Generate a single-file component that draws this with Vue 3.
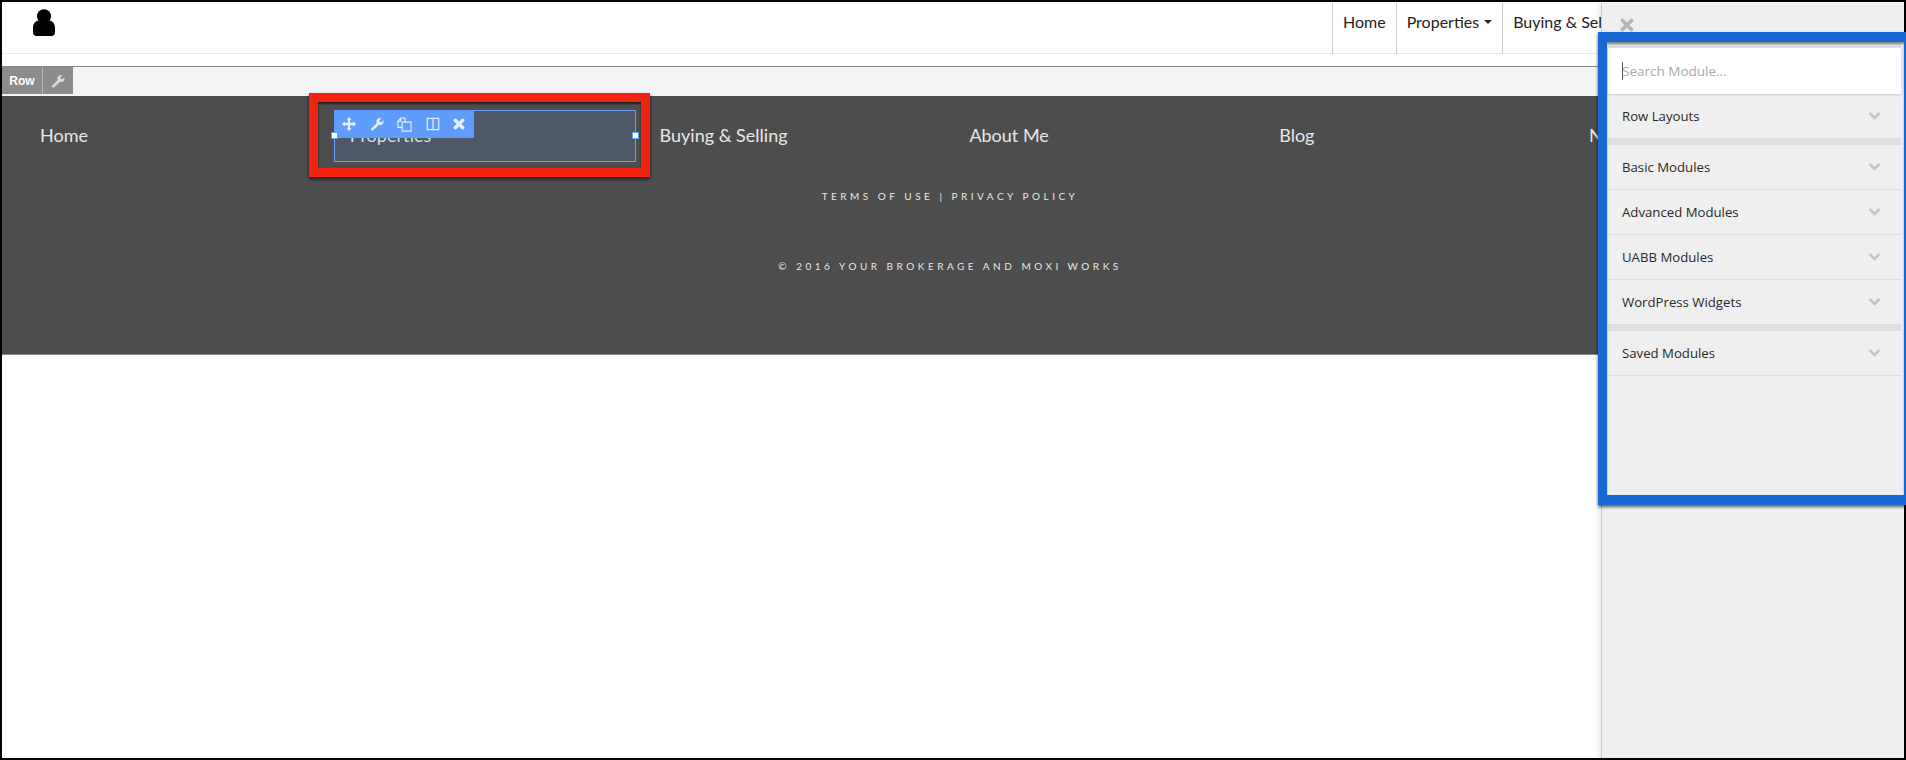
<script setup>
const headerNav = [
  { label: 'Home' },
  { label: 'Properties', caret: true },
  { label: 'Buying & Selling' },
]
const footerNav = ['Home', 'Properties', 'Buying & Selling', 'About Me', 'Blog', 'News']
const modules = [
  { label: 'Row Layouts', band: true },
  { label: 'Basic Modules' },
  { label: 'Advanced Modules' },
  { label: 'UABB Modules' },
  { label: 'WordPress Widgets', band: true },
  { label: 'Saved Modules' },
]
</script>

<template>
  <div class="page">
    <header class="site-header">
      <svg class="avatar" viewBox="0 0 22 27" width="22" height="27" aria-hidden="true">
        <circle cx="11" cy="7.2" r="7" fill="#000" />
        <path d="M0 19c0-4 2-7 5.400-7.600C7 12.600 9 13.200 11 13.200s4-.6 5.600-1.800C20 12 22 15 22 19v4.500c0 2-1.600 3.500-3.500 3.500h-15C1.600 27 0 25.500 0 23.500z" fill="#000" />
      </svg>
      <nav class="top-nav">
        <a v-for="item in headerNav" :key="item.label" class="top-link">
          {{ item.label }}<i v-if="item.caret" class="caret"></i>
        </a>
      </nav>
    </header>

    <div class="gap"></div>

    <div class="row-band">
      <span class="row-tab">Row</span>
      <span class="row-tool">
        <svg viewBox="0 0 16 16" width="14" height="14" aria-hidden="true">
          <path d="M1.500 13.200 7.600 7.100C7 5 7.600 3.200 9 2.100c1.200-.9 2.700-1.100 4-.6L10.700 3.800l.4 1.900 1.900.4 2.300-2.300c.5 1.400.2 2.900-.8 4.100-1.100 1.200-2.800 1.700-4.700 1.100l-6.100 6.100c-.6.600-1.500.6-2.100 0s-.7-1.300-.1-1.900z" fill="#dcdcdc" />
        </svg>
      </span>
    </div>

    <section class="footer-dark">
      <nav class="foot-nav">
        <a v-for="item in footerNav" :key="item" class="foot-link">{{ item }}</a>
      </nav>
      <p class="legal terms">TERMS OF USE | PRIVACY POLICY</p>
      <p class="legal copy">© 2016 YOUR BROKERAGE AND MOXI WORKS</p>
    </section>

    <div class="red-box"></div>

    <div class="selection">
      <div class="sel-toolbar">
        <svg viewBox="0 0 16 16" width="14" height="14" aria-hidden="true">
          <path d="M8 0 11 3.200H9.300V6.700H12.800V5L16 8l-3.200 3V9.300H9.300v3.500H11L8 16l-3-3.200H6.700V9.300H3.200V11L0 8l3.200-3v1.700H6.700V3.200H5z" fill="#e3eeff" />
        </svg>
        <svg viewBox="0 0 16 16" width="14" height="14" aria-hidden="true">
          <path d="M1.500 13.200 7.600 7.100C7 5 7.600 3.200 9 2.100c1.200-.9 2.700-1.100 4-.6L10.700 3.800l.4 1.900 1.900.4 2.300-2.300c.5 1.400.2 2.900-.8 4.100-1.100 1.200-2.800 1.700-4.700 1.100l-6.100 6.100c-.6.600-1.500.6-2.100 0s-.7-1.300-.1-1.900z" fill="#e3eeff" />
        </svg>
        <svg viewBox="0 0 16 16" width="15" height="15" aria-hidden="true">
          <path d="M5.500 11H1V4.500L4 1H8.500V5.500M4 1V4.500H1M5.500 5.500H15V15H5.500z" fill="none" stroke="#e3eeff" stroke-width="1.200" />
        </svg>
        <svg viewBox="0 0 16 16" width="14" height="14" aria-hidden="true">
          <path d="M1.500 1.500h13v13h-13zM8 1.500v13" fill="none" stroke="#e3eeff" stroke-width="1.400" />
        </svg>
        <svg viewBox="0 0 16 16" width="12" height="12" aria-hidden="true">
          <path d="M3 3 13 13M13 3 3 13" fill="none" stroke="#e3eeff" stroke-width="4.600" stroke-linecap="round" />
        </svg>
      </div>
      <i class="handle handle-left"></i>
      <i class="handle handle-right"></i>
    </div>

    <aside class="panel">
      <svg class="close" viewBox="0 0 14 14" width="14" height="14" aria-hidden="true">
        <path d="M2.500 2.500 11.500 11.500M11.500 2.500 2.500 11.500" fill="none" stroke="#b5b5b5" stroke-width="3.800" stroke-linecap="round" />
      </svg>
      <div class="search-wrap">
        <div class="search"><i class="cursor"></i><span>Search Module...</span></div>
      </div>
      <div
        v-for="mod in modules"
        :key="mod.label"
        class="module"
        :class="{ banded: mod.band }"
      >
        <span>{{ mod.label }}</span>
        <svg viewBox="0 0 14 9" width="13" height="8" aria-hidden="true">
          <path d="M1.500 1.200 7 6.700l5.500-5.500" fill="none" stroke="#c4c4c4" stroke-width="3" />
        </svg>
      </div>
    </aside>

    <div class="blue-frame"></div>
  </div>
</template>

<style scoped>
.page {
  position: relative;
  width: 1906px;
  height: 760px;
  overflow: hidden;
  background: #fff;
  font-family: "Lato", "Liberation Sans", sans-serif;
}
.page::after {
  content: "";
  position: absolute;
  inset: 0;
  border: 2px solid #000;
  pointer-events: none;
  z-index: 5;
}
.site-header {
  box-sizing: border-box;
  display: flex;
  height: 54px;
  padding-top: 2px;
  border-top: 1px solid #aaa;
  border-bottom: 1px solid #eaeaea;
}
.avatar {
  margin: 6px 0 0 33px;
  flex: none;
}
.top-nav {
  display: flex;
  margin-left: 1277px;
  flex: none;
}
.top-link {
  display: flex;
  align-items: flex-start;
  gap: 5px;
  box-sizing: border-box;
  height: 51px;
  padding: 9px 10px 0;
  border-left: 1px solid #ccc;
  font-size: 16px;
  line-height: 20px;
  color: #222;
  white-space: nowrap;
}
.caret {
  margin-top: 8px;
  border: 4px solid transparent;
  border-top-color: #222;
  border-bottom: 0;
}
.gap {
  height: 12px;
}
.row-band {
  display: flex;
  height: 29px;
  border-top: 1px solid #8a8a8a;
  background: #f4f4f4;
  align-items: flex-start;
  padding-left: 2px;
}
.row-tab,
.row-tool {
  display: flex;
  align-items: center;
  justify-content: center;
  height: 27px;
  background: #8c8c8c;
  color: #fff;
}
.row-tab {
  width: 41px;
  box-sizing: border-box;
  font: bold 12px "Liberation Sans", sans-serif;
  border-right: 1px solid #b5b5b5;
}
.row-tool {
  width: 30px;
}
.footer-dark {
  box-sizing: border-box;
  height: 259px;
  background: #4d4d4d;
  border-bottom: 1px solid #8a8a8a;
  color: #e8e8e8;
}
.foot-nav {
  display: grid;
  grid-template-columns: repeat(6, 309.800px);
  padding: 27px 0 0 40px;
}
.foot-link {
  font-size: 18px;
  line-height: 24px;
  white-space: nowrap;
}
.legal {
  margin: 0;
  text-align: center;
  font-size: 10px;
  line-height: 12px;
  letter-spacing: 3.500px;
  white-space: nowrap;
  width: 1900px;
}
.terms {
  margin-top: 43px;
}
.copy {
  margin-top: 58px;
}
.red-box {
  position: absolute;
  left: 309px;
  top: 93px;
  box-sizing: border-box;
  width: 341px;
  height: 84px;
  border: 9px solid #f3220f;
  box-shadow: 0 2px 3px rgba(0, 0, 0, 0.7), inset 0 2px 2px rgba(0, 0, 0, 0.6);
}
.selection {
  position: absolute;
  left: 334px;
  top: 110px;
  box-sizing: border-box;
  width: 302px;
  height: 52px;
  border: 1px solid #6a9ff5;
  background: rgba(93, 156, 252, 0.14);
}
.sel-toolbar {
  position: absolute;
  left: -1px;
  top: -1px;
  box-sizing: border-box;
  display: flex;
  align-items: center;
  gap: 13.500px;
  width: 140px;
  height: 28px;
  padding-left: 8px;
  background: #5f9cfb;
}
.sel-toolbar svg {
  flex: none;
}
.handle {
  position: absolute;
  top: 21px;
  width: 5px;
  height: 5px;
  background: #fff;
  border: 1px solid #5f9cfb;
}
.handle-left {
  left: -4px;
}
.handle-right {
  right: -4px;
}
.panel {
  position: absolute;
  left: 1601px;
  top: 3px;
  right: 0;
  bottom: 0;
  box-sizing: border-box;
  padding: 39px 5px 0 6px;
  background: #efefef;
  border-left: 1px solid #c8c8c8;
  box-shadow: -3px 0 4px rgba(0, 0, 0, 0.08);
  font-family: "Open Sans", "Liberation Sans", sans-serif;
  z-index: 2;
}
.close {
  position: absolute;
  left: 18px;
  top: 15px;
}
.search-wrap {
  height: 52px;
  background: #dedede;
  padding-top: 6px;
  box-sizing: border-box;
}
.search {
  display: flex;
  align-items: center;
  height: 46px;
  padding-left: 14px;
  background: #fff;
  box-shadow: 0 1px 2px rgba(0, 0, 0, 0.15);
  font-size: 13.500px;
  color: #aaa;
}
.cursor {
  width: 1px;
  height: 18px;
  background: #555;
}
.search span {
  margin-left: -1px;
}
.module {
  box-sizing: border-box;
  display: flex;
  align-items: center;
  justify-content: space-between;
  height: 45px;
  padding: 0 20px 0 14px;
  border-bottom: 1px solid #dedede;
  font-size: 13.200px;
  color: #2a2a2a;
}
.banded {
  height: 51px;
  border-bottom: 7px solid #dedede;
}
.blue-frame {
  position: absolute;
  left: 1598px;
  top: 32px;
  box-sizing: border-box;
  width: 308px;
  height: 473px;
  border: solid #1769d3;
  border-width: 10px 2px 10px 9px;
  box-shadow: 0 2px 3px rgba(0, 0, 0, 0.6), inset 0 2px 2px rgba(0, 0, 0, 0.4);
  z-index: 6;
}
</style>
